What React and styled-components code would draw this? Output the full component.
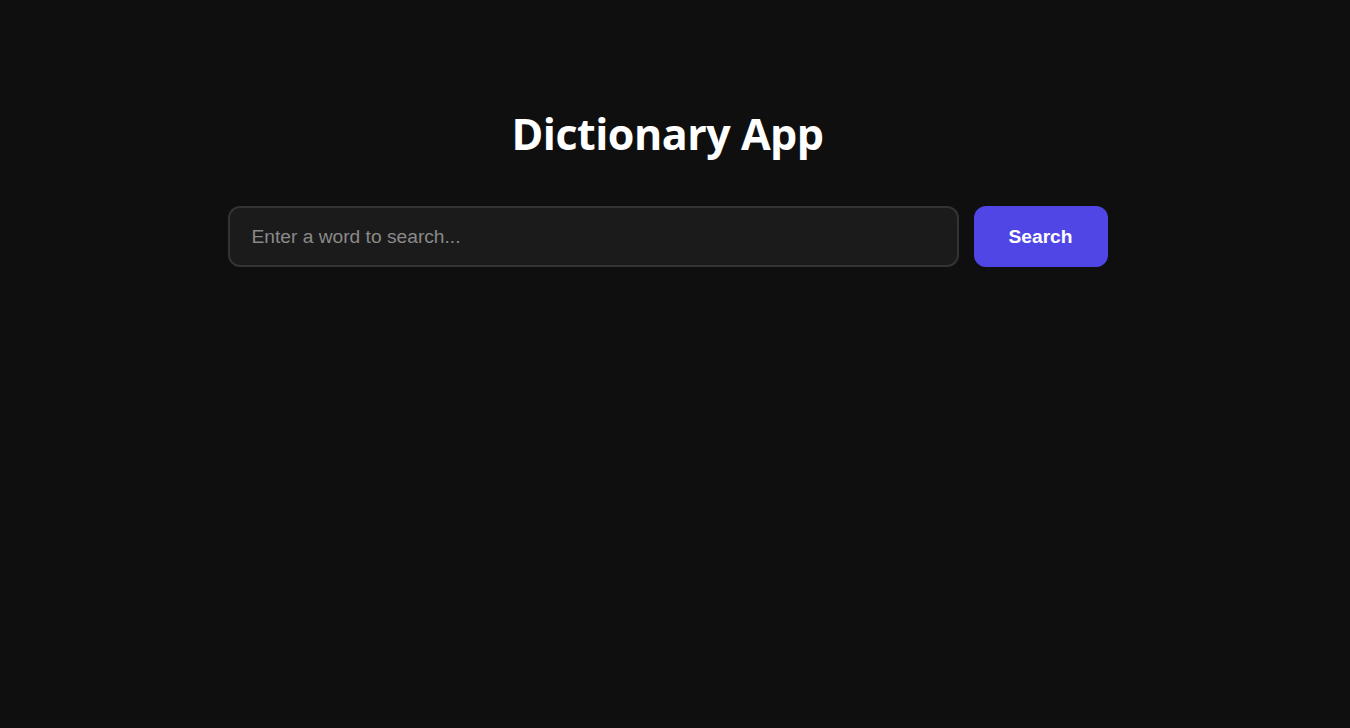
import React, { useState } from "react";
import styled, { createGlobalStyle } from "styled-components";

const GlobalStyle = createGlobalStyle`
  html, body {
    margin: 0;
    padding: 0;
    background: #0f0f0f;
  }
  * {
    box-sizing: border-box;
  }
`;

const Page = styled.div`
  min-height: 100vh;
  box-sizing: content-box;
  padding: 32px 35px 32px 20px;
  background: #0f0f0f;
  color: #ffffff;
  font-family: "Liberation Sans", Arial, sans-serif;
`;

const Container = styled.main`
  width: 100%;
  max-width: 880px;
  margin: 0 auto;
  padding-top: 76px;
  display: flex;
  flex-direction: column;
  align-items: center;
`;

const Title = styled.h1`
  margin: 0 0 46px;
  font-family: "Open Sans", "Noto Sans", sans-serif;
  font-weight: 700;
  font-size: 43px;
  line-height: 52px;
  color: #ffffff;
  letter-spacing: -0.5px;
`;

const SearchForm = styled.form`
  display: flex;
  width: 100%;
  gap: 15px;
`;

const SearchInput = styled.input`
  flex: 1;
  height: 61px;
  padding: 0 22px;
  background: #1b1b1b;
  border: 2px solid #333333;
  border-radius: 12px;
  color: #ffffff;
  font-family: "Liberation Sans", Arial, sans-serif;
  font-size: 19.2px;
  outline: none;

  &::placeholder {
    color: #8a8a8a;
  }
`;

const SearchButton = styled.button`
  width: 134px;
  height: 61px;
  border: none;
  border-radius: 12px;
  background: #4f46e5;
  color: #ffffff;
  font-family: "Liberation Sans", Arial, sans-serif;
  font-weight: 700;
  font-size: 19.2px;
  cursor: pointer;
`;

export default function App() {
  const [word, setWord] = useState("");

  return (
    <>
      <GlobalStyle />
      <Page>
        <Container>
          <Title>Dictionary App</Title>
          <SearchForm onSubmit={(e) => e.preventDefault()}>
            <SearchInput
              type="text"
              placeholder="Enter a word to search..."
              value={word}
              onChange={(e) => setWord(e.target.value)}
            />
            <SearchButton type="submit">Search</SearchButton>
          </SearchForm>
        </Container>
      </Page>
    </>
  );
}
